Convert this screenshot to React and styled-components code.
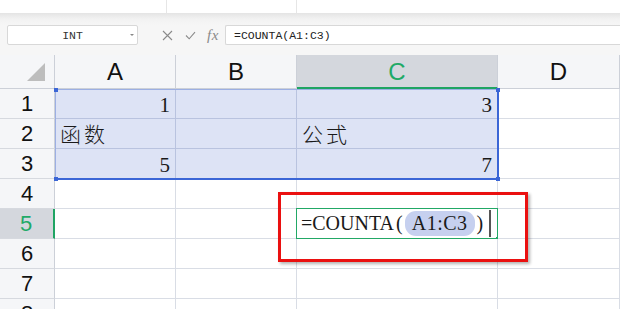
import React from "react";
import styled, { createGlobalStyle } from "styled-components";

const Global = createGlobalStyle`
  html, body { margin: 0; padding: 0; background: #fff; }
  body { width: 620px; height: 309px; overflow: hidden; font-family: "Liberation Sans", "Noto Sans CJK SC", sans-serif; }
  * { box-sizing: border-box; }
`;

const Page = styled.div`
  width: 620px;
  height: 309px;
  overflow: hidden;
  display: flex;
  flex-direction: column;
  & > * { flex-shrink: 0; }
`;

const TopStrip = styled.div`
  height: 13px;
  display: flex;
  background: #fff;
`;

const StripCol = styled.div`
  width: ${(p) => p.$w}px;
  flex: ${(p) => (p.$w ? "none" : "1")};
  border-right: ${(p) => (p.$line ? "1px solid #e6e6e6" : "none")};
`;

const Toolbar = styled.div`
  height: 42px;
  display: flex;
  align-items: flex-start;
  padding-top: 12px;
  background: linear-gradient(#e4e4e4 0, #f2f2f2 6px, #f6f6f6 12px, #f6f6f6 100%);
`;

const NameBox = styled.div`
  margin-left: 7px;
  width: 131px;
  height: 20px;
  background: #fff;
  border: 1px solid #d8d8d8;
  border-radius: 2px;
  display: flex;
  align-items: center;
  justify-content: center;
  position: relative;
  font-family: "Liberation Mono", monospace;
  font-size: 11.5px;
  color: #333;
`;

const Caret = styled.span`
  position: absolute;
  right: 3px;
  top: 8px;
  width: 0;
  height: 0;
  border-left: 2px solid transparent;
  border-right: 2px solid transparent;
  border-top: 2px solid #888;
`;

const Icons = styled.div`
  width: 87px;
  height: 20px;
  display: flex;
  align-items: center;
  padding-left: 19px;
`;

const IconSlot = styled.div`
  width: ${(p) => p.$w}px;
  height: 20px;
  display: flex;
  align-items: center;
  justify-content: center;
`;

const Fx = styled.span`
  font-family: "Liberation Serif", serif;
  font-style: italic;
  font-size: 15px;
  color: #8a8a8a;
  letter-spacing: 0.5px;
`;

const FormulaInput = styled.div`
  flex: 1;
  height: 20px;
  background: #fff;
  border: 1px solid #d8d8d8;
  border-right: none;
  border-radius: 2px 0 0 2px;
  display: flex;
  align-items: center;
  padding-left: 8px;
  font-family: "Liberation Mono", monospace;
  font-size: 11.5px;
  color: #222;
`;

const Sheet = styled.div`
  position: relative;
  display: grid;
  grid-template-columns: 55px 121px 121px 201px 1fr;
  grid-template-rows: 34px repeat(8, 30px);
`;

const Corner = styled.div`
  background: #f5f6f8;
  border-right: 1px solid #ccd0d8;
  border-bottom: 1px solid #ccd0d8;
  position: relative;
`;

const Triangle = styled.div`
  position: absolute;
  left: 27px;
  top: 8px;
  width: 0;
  height: 0;
  border-left: 18px solid transparent;
  border-bottom: 18px solid #bdbdbd;
`;

const ColHead = styled.div`
  background: ${(p) => (p.$active ? "#d4d7dd" : "#f5f6f8")};
  color: ${(p) => (p.$active ? "#1faa67" : "#111")};
  border-right: 1px solid #ccd0d8;
  border-bottom: ${(p) => (p.$active ? "2px solid #1fa463" : "1px solid #ccd0d8")};
  display: flex;
  align-items: center;
  justify-content: center;
  font-family: "Liberation Sans", sans-serif;
  font-size: 24px;
  padding-top: 1px;
`;

const RowHead = styled.div`
  background: ${(p) => (p.$active ? "#d4d7dd" : "#f5f6f8")};
  color: ${(p) => (p.$active ? "#1faa67" : "#111")};
  border-right: ${(p) => (p.$active ? "2px solid #1fa463" : "1px solid #ccd0d8")};
  border-bottom: 1px solid #d6d9df;
  display: flex;
  align-items: center;
  justify-content: center;
  font-family: "Liberation Sans", sans-serif;
  font-size: 22px;
  padding-right: ${(p) => (p.$active ? "1px" : "0")};
`;

const Cell = styled.div`
  position: relative;
  background: ${(p) => (p.$sel ? "#dde3f5" : "#fff")};
  border-right: 1px solid ${(p) => (p.$sel ? "#b9c3df" : "#d9dde5")};
  border-bottom: 1px solid ${(p) => (p.$sel ? "#b9c3df" : "#d9dde5")};
  display: flex;
  align-items: flex-end;
  justify-content: ${(p) => (p.$right ? "flex-end" : "flex-start")};
  padding: 0 5px 1px 5px;
  color: #1a1a1a;
`;

const Num = styled.span`
  font-family: "Liberation Serif", serif;
  font-size: 21px;
  line-height: 24px;
`;

const Han = styled.span`
  font-family: "Noto Sans CJK SC", sans-serif;
  font-size: 21px;
  line-height: 27px;
  font-weight: 300;
  letter-spacing: 3px;
`;

const Editor = styled.div`
  position: absolute;
  left: -1px;
  top: -1px;
  right: -1px;
  bottom: -1px;
  border: 1px solid #22a866;
  display: flex;
  align-items: center;
  padding-left: 4px;
  font-family: "Liberation Serif", serif;
  font-size: 20px;
  color: #1a1a1a;
`;

const Paren = styled.span`
  font-family: "Liberation Serif", serif;
  margin: 0 2px;
`;

const RefPill = styled.span`
  font-family: "Liberation Serif", serif;
  background: #c6d0ef;
  border-radius: 11px;
  padding: 1px 7px;
  letter-spacing: 0.5px;
`;

const TextCursor = styled.span`
  width: 2px;
  height: 27px;
  background: #555;
  margin-left: 4px;
`;

const FillHandle = styled.span`
  position: absolute;
  right: -3px;
  bottom: -3px;
  width: 4px;
  height: 4px;
  background: #22a866;
`;

const Selection = styled.div`
  position: absolute;
  left: 55px;
  top: 34px;
  width: 444px;
  height: 91px;
  border-top: 1px solid #9cafe3;
  border-left: 1px solid #9cafe3;
  border-right: 2px solid #3b66d6;
  border-bottom: 2px solid #3b66d6;
  pointer-events: none;
`;

const Handle = styled.span`
  position: absolute;
  width: 4px;
  height: 4px;
  background: #3b66d6;
  ${(p) => (p.$top ? "top: -2px;" : "bottom: -3px;")}
  ${(p) => (p.$left ? "left: -2px;" : "right: -3px;")}
`;

const Callout = styled.div`
  position: absolute;
  left: 278px;
  top: 137px;
  width: 250px;
  height: 70px;
  border: 3px solid #ea1010;
  box-shadow: 2px 2px 3px rgba(0, 0, 0, 0.3);
  pointer-events: none;
`;

const cols = ["A", "B", "C", "D"];

const data = {
  1: { A: { v: "1", right: true }, C: { v: "3", right: true } },
  2: { A: { v: "函数", han: true }, C: { v: "公式", han: true } },
  3: { A: { v: "5", right: true }, C: { v: "7", right: true } },
};

export default function App() {
  const rows = [1, 2, 3, 4, 5, 6, 7, 8];
  return (
    <Page>
      <Global />
      <TopStrip>
        <StripCol $w={167} $line />
        <StripCol $w={130} $line />
        <StripCol />
      </TopStrip>
      <Toolbar>
        <NameBox>
          INT
          <Caret />
        </NameBox>
        <Icons>
          <IconSlot $w={20}>
            <svg width="11" height="11" viewBox="0 0 11 11">
              <path d="M1 1 L10 10 M10 1 L1 10" stroke="#8a8a8a" strokeWidth="1.1" fill="none" />
            </svg>
          </IconSlot>
          <IconSlot $w={26}>
            <svg width="11" height="9" viewBox="0 0 11 9">
              <path d="M1 4.5 L4.2 7.8 L10 1.2" stroke="#8a8a8a" strokeWidth="1.1" fill="none" />
            </svg>
          </IconSlot>
          <IconSlot $w={20}>
            <Fx>fx</Fx>
          </IconSlot>
        </Icons>
        <FormulaInput>=COUNTA(A1:C3)</FormulaInput>
      </Toolbar>
      <Sheet>
        <Corner>
          <Triangle />
        </Corner>
        {cols.map((c) => (
          <ColHead key={c} $active={c === "C"}>
            {c}
          </ColHead>
        ))}
        {rows.map((r) => (
          <React.Fragment key={r}>
            <RowHead $active={r === 5}>{r}</RowHead>
            {cols.map((c) => {
              const d = data[r] && data[r][c];
              const sel = r <= 3 && c !== "D";
              return (
                <Cell key={c} $sel={sel} $right={d && d.right}>
                  {d && (d.han ? <Han>{d.v}</Han> : <Num>{d.v}</Num>)}
                  {r === 5 && c === "C" && (
                    <Editor>
                      =COUNTA<Paren>(</Paren>
                      <RefPill>A1:C3</RefPill>
                      <Paren>)</Paren>
                      <TextCursor />
                      <FillHandle />
                    </Editor>
                  )}
                </Cell>
              );
            })}
          </React.Fragment>
        ))}
        <Selection>
          <Handle $top $left />
          <Handle $top />
          <Handle $left />
          <Handle />
        </Selection>
        <Callout />
      </Sheet>
    </Page>
  );
}
